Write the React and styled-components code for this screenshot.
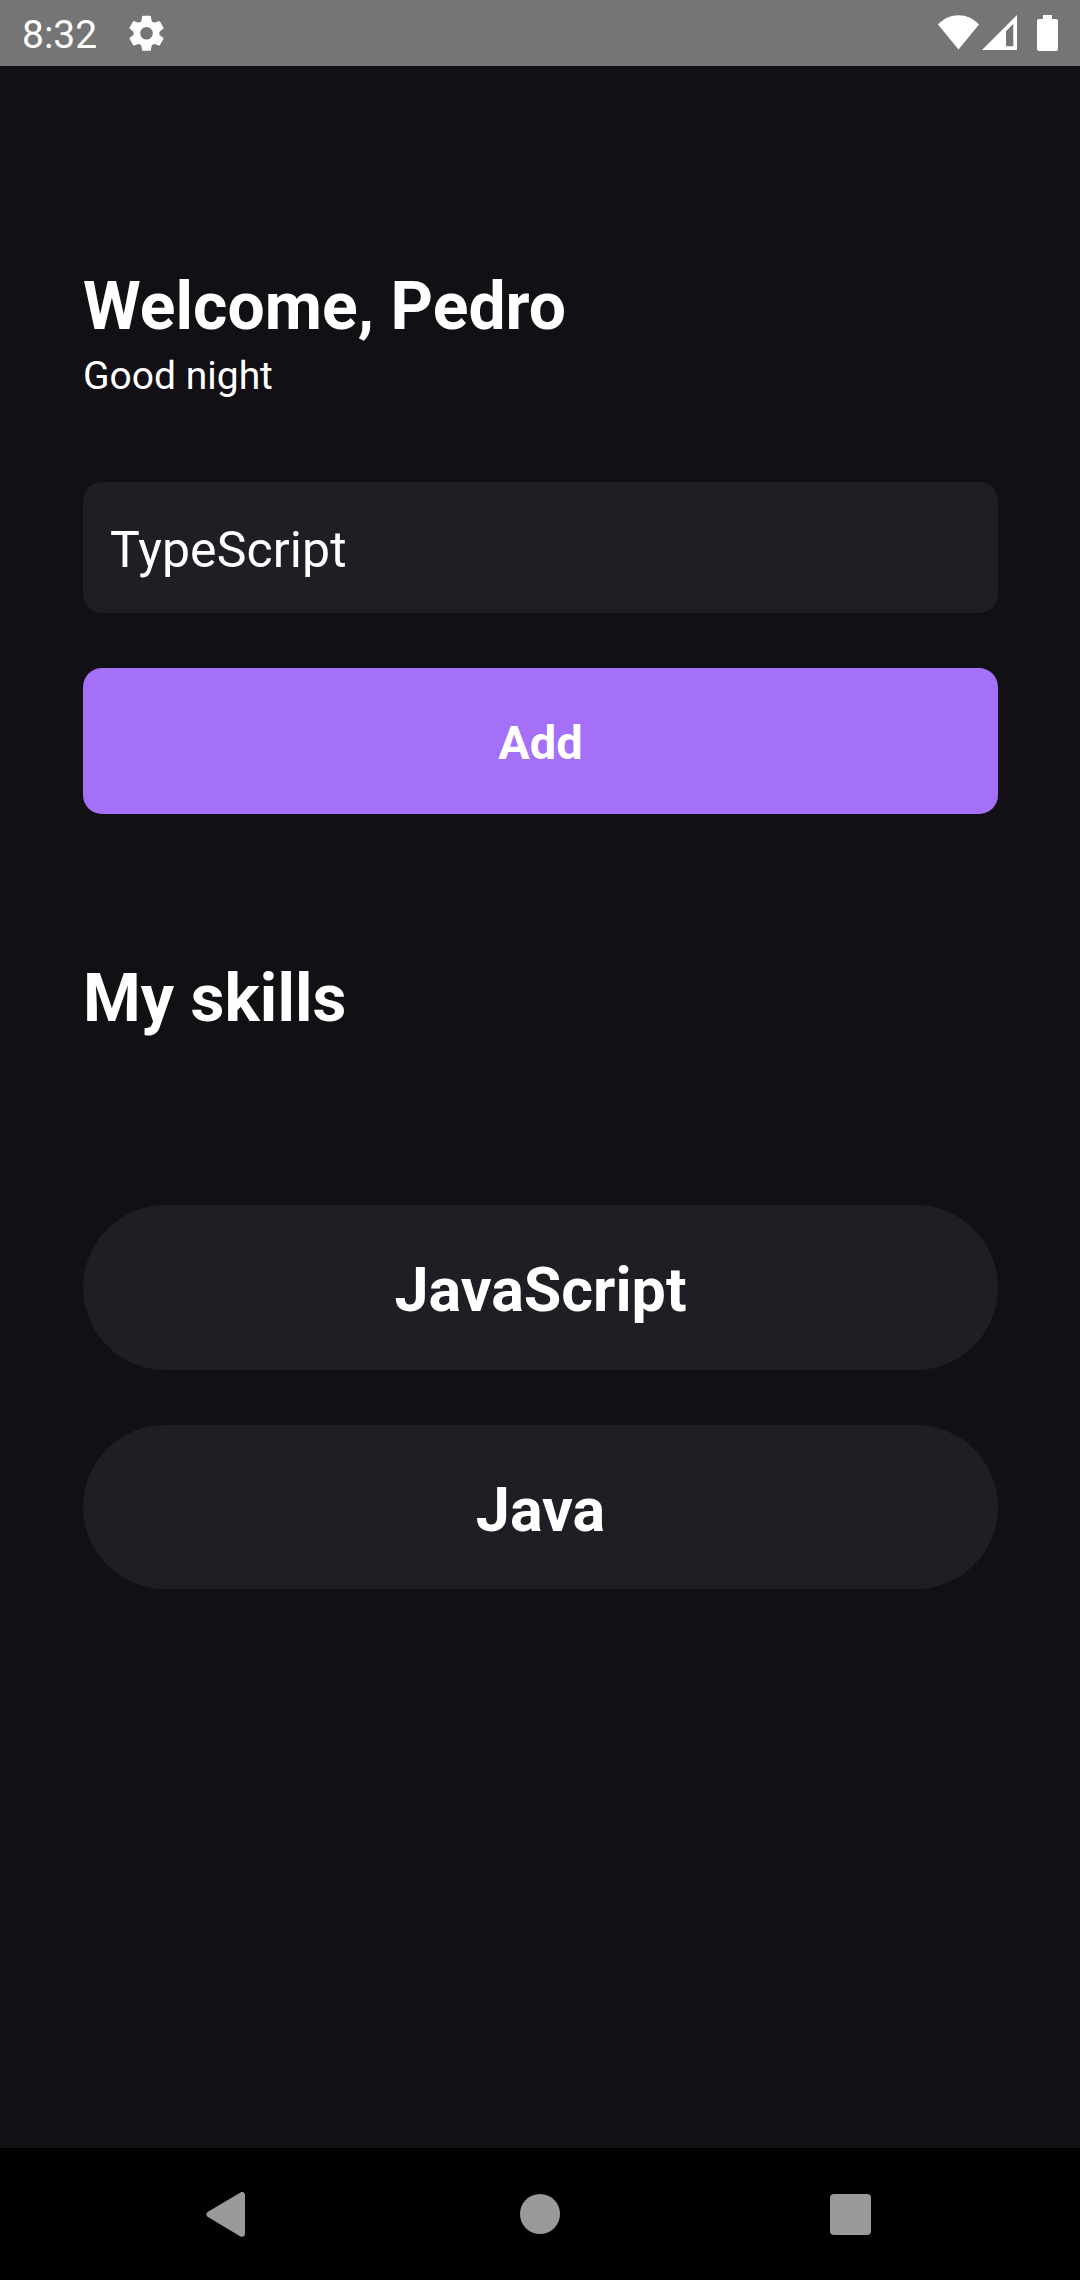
import React, { useState } from "react";
import styled, { createGlobalStyle } from "styled-components";

const GlobalStyle = createGlobalStyle`
  *, *::before, *::after { box-sizing: border-box; }
  html, body { margin: 0; padding: 0; background: #121015; }
  button, input { font-family: inherit; border: 0; margin: 0; outline: none; }
`;

const Screen = styled.div`
  display: flex;
  flex-direction: column;
  width: 1080px;
  height: 2280px;
  overflow: hidden;
  background: #121015;
  color: #fff;
  font-family: Roboto, "Liberation Sans", sans-serif;
`;

const StatusBar = styled.header`
  display: flex;
  align-items: center;
  flex: none;
  height: 66px;
  padding: 0 21px 0 22px;
  background: #757575;
`;

const Clock = styled.span`
  width: 106px;
  padding-top: 3px;
  font-size: 39px;
  line-height: 46px;
`;

const StatusIcons = styled.div`
  display: flex;
  align-items: center;
  margin-left: auto;
`;

const Content = styled.main`
  display: flex;
  flex-direction: column;
  flex: 1;
  padding: 202px 82px 0 83px;
`;

const Title = styled.h1`
  margin: 0;
  font-size: 66px;
  font-weight: 700;
  line-height: 78px;
  letter-spacing: 0.06px;
`;

const Greeting = styled.p`
  margin: 0;
  font-size: 39px;
  line-height: 46px;
  padding-top: 7px;
`;

const SkillInput = styled.input`
  height: 131px;
  margin-top: 83px;
  padding: 4px 27px 0;
  border-radius: 19px;
  background: #1f1e25;
  color: #fff;
  font-size: 50px;
  letter-spacing: 0.1px;
`;

const AddButton = styled.button`
  display: flex;
  align-items: center;
  justify-content: center;
  height: 146px;
  margin-top: 55px;
  padding: 2px 0 0;
  border-radius: 19px;
  background: #a370f7;
  color: #fff;
  font-size: 47px;
  font-weight: 700;
`;

const SectionTitle = styled(Title)`
  margin-top: 146px;
`;

const SkillList = styled.ul`
  display: flex;
  flex-direction: column;
  gap: 55px;
  margin: 167px 0 0;
  padding: 0;
  list-style: none;
`;

const SkillCard = styled.li`
  display: flex;
  align-items: center;
  justify-content: center;
  height: ${({ $height }) => $height}px;
  padding-top: 5px;
  border-radius: 83px;
  background: #1f1e25;
  font-size: 61px;
  font-weight: 700;
`;

const NavBar = styled.nav`
  display: grid;
  grid-template-columns: 312px 316px 305px;
  flex: none;
  height: 132px;
  padding-left: 70px;
  background: #000;
`;

const NavButton = styled.button`
  display: flex;
  align-items: center;
  justify-content: center;
  padding: 0;
  background: transparent;
  color: #999;
`;

const GearIcon = () => (
  <svg width="37" height="36" viewBox="-18.5 -18.3 37 36" fill="#fff">
    <circle r="9.6" fill="none" stroke="#fff" strokeWidth="6.6" />
    {[0, 60, 120, 180, 240, 300].map((angle) => (
      <path
        key={angle}
        transform={`rotate(${angle})`}
        d="M-6.8 -10 Q-5.4 -11.4 -5.1 -12.6 L-4.4 -16.6 Q-4.3 -17.5 -3.4 -17.5 H3.4 Q4.3 -17.5 4.4 -16.6 L5.1 -12.6 Q5.4 -11.4 6.8 -10Z"
      />
    ))}
  </svg>
);

const SystemIcons = () => (
  <svg width="125" height="40" viewBox="0 0 125 40" fill="#fff">
    <path d="M4 11.5 C15.5 -0.8 33.5 -0.8 45 11.5 L24.5 36.5Z" />
    <path fillRule="evenodd" d="M83 2 V37 H48Z M79.3 10.8 L72 18.3 V33.2 H79.3Z" />
    <path d="M109 2 h9 v4 h4 q2 0 2 2 v28 q0 2 -2 2 h-17 q-2 0 -2 -2 v-28 q0 -2 2 -2 h4Z" />
  </svg>
);

const BackIcon = () => (
  <svg width="40" height="46" viewBox="0 -0.5 40 46">
    <path d="M3.5 22.9 L36 3.5 V42.3Z" fill="currentColor" stroke="currentColor" strokeWidth="6" strokeLinejoin="round" />
  </svg>
);

const HomeIcon = () => (
  <svg width="40" height="40" viewBox="0 0 40 40">
    <circle cx="20" cy="20" r="20" fill="currentColor" />
  </svg>
);

const RecentsIcon = () => (
  <svg width="41" height="42" viewBox="0 0 41 42">
    <rect y="1" width="41" height="41" rx="4" fill="currentColor" />
  </svg>
);

const skills = [
  { name: "JavaScript", height: 165 },
  { name: "Java", height: 164 },
];

export default function App() {
  const [newSkill, setNewSkill] = useState("TypeScript");
  return (
    <>
      <GlobalStyle />
      <Screen>
        <StatusBar>
          <Clock>8:32</Clock>
          <GearIcon />
          <StatusIcons>
            <SystemIcons />
          </StatusIcons>
        </StatusBar>
        <Content>
          <Title>Welcome, Pedro</Title>
          <Greeting>Good night</Greeting>
          <SkillInput value={newSkill} onChange={(e) => setNewSkill(e.target.value)} />
          <AddButton>Add</AddButton>
          <SectionTitle as="h2">My skills</SectionTitle>
          <SkillList>
            {skills.map((skill) => (
              <SkillCard key={skill.name} $height={skill.height}>{skill.name}</SkillCard>
            ))}
          </SkillList>
        </Content>
        <NavBar>
          <NavButton aria-label="Back"><BackIcon /></NavButton>
          <NavButton aria-label="Home"><HomeIcon /></NavButton>
          <NavButton aria-label="Recents"><RecentsIcon /></NavButton>
        </NavBar>
      </Screen>
    </>
  );
}
